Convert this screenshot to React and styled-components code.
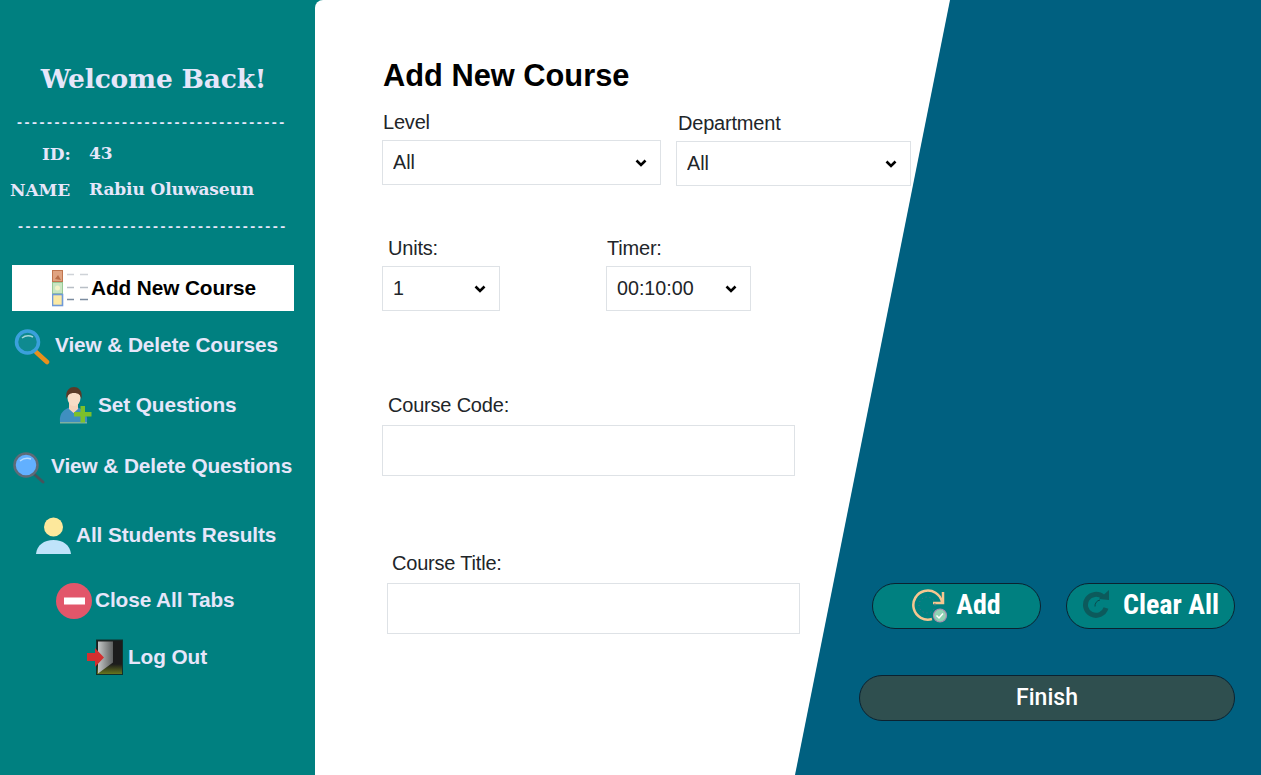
import React from "react";
import styled, {createGlobalStyle} from "styled-components";

const GlobalStyle = createGlobalStyle`
  html, body {
    margin: 0;
    padding: 0;
    background: #008080;
  }
  body {
    font-family: "Liberation Sans", Arial, sans-serif;
    overflow: hidden;
  }
`;

const Page = styled.div`
  width: 1261px;
  height: 775px;
  display: flex;
  background: #008080;
  overflow: hidden;
`;

const Sidebar = styled.aside`
  width: 315px;
  flex: none;
  display: flex;
  flex-direction: column;
  color: #e6e6fa;
`;

const Welcome = styled.h2`
  margin: 61px 0 0;
  height: 36px;
  line-height: 36px;
  width: 307px;
  text-align: center;
  font-family: "DejaVu Serif", serif;
  font-weight: 700;
  font-size: 26.5px;
  letter-spacing: -0.2px;
`;

const Dashes = styled.div`
  margin: ${(p) => p.$top}px 0 0 ${(p) => p.$left}px;
  height: 16px;
  line-height: 16px;
  font-family: "Liberation Sans", sans-serif;
  font-size: 15px;
  font-weight: 700;
  letter-spacing: 2.5px;
  white-space: nowrap;
`;

const InfoRow = styled.div`
  display: grid;
  grid-template-columns: 89px 1fr;
  margin-top: ${(p) => p.$top}px;
  height: 24px;
  font-family: "DejaVu Serif", serif;
  font-weight: 700;
`;

const InfoLabel = styled.span`
  padding-left: ${(p) => p.$left}px;
  font-size: 17px;
  line-height: 24px;
  white-space: nowrap;
  letter-spacing: -0.1px;
`;

const InfoValue = styled.span`
  font-size: 17px;
  line-height: 22px;
  white-space: nowrap;
  letter-spacing: -0.1px;
`;

const Nav = styled.nav`
  display: flex;
  flex-direction: column;
  margin-top: 31px;
`;

const NavItem = styled.a`
  display: flex;
  align-items: center;
  height: ${(p) => p.$height}px;
  margin: ${(p) => p.$top}px 21px 0 12px;
  padding-left: ${(p) => p.$left - 12}px;
  gap: 2px;
  background: ${(p) => (p.$active ? "#ffffff" : "transparent")};
  color: ${(p) => (p.$active ? "#000000" : "#e6e6fa")};
  font-size: 20.8px;
  font-weight: 700;
  letter-spacing: -0.1px;
  white-space: nowrap;
  cursor: pointer;
`;

const Main = styled.main`
  flex: 1;
  position: relative;
  display: grid;
  background: #ffffff;
  border-top-left-radius: 8px;
  overflow: hidden;

  &::before {
    content: "";
    position: absolute;
    inset: 0;
    background: #006080;
    clip-path: polygon(635px 0, 100% 0, 100% 100%, 480px 100%);
  }
`;

const Form = styled.form`
  grid-area: 1 / 1;
  position: relative;
  padding: 57px 0 0 67px;
  display: flex;
  flex-direction: column;
  color: #212529;
`;

const Title = styled.h2`
  margin: 0 0 0 1px;
  height: 38px;
  line-height: 38px;
  color: #000000;
  font-size: 30.8px;
  font-weight: 700;
`;

const Row = styled.div`
  display: flex;
  align-items: flex-start;
  margin-top: ${(p) => p.$top}px;
`;

const Field = styled.label`
  display: flex;
  flex-direction: column;
  margin: ${(p) => p.$top || 0}px 0 0 ${(p) => p.$left || 0}px;
`;

const FieldLabel = styled.span`
  height: 26px;
  line-height: 26px;
  padding-left: ${(p) => p.$indent || 0}px;
  font-size: 20px;
  letter-spacing: -0.2px;
  white-space: nowrap;
`;

const chevron = `url("data:image/svg+xml,%3csvg xmlns='http://www.w3.org/2000/svg' viewBox='0 0 12 12'%3e%3cpath fill='none' stroke='%23000' stroke-width='2.6' d='M1.500 3.500l4.500 4.500 4.500-4.500'/%3e%3c/svg%3e")`;

const Select = styled.select`
  box-sizing: border-box;
  width: ${(p) => p.$width}px;
  height: 45px;
  margin-top: ${(p) => p.$gap}px;
  padding: 0 30px 2px 10px;
  appearance: none;
  background: #ffffff ${chevron} no-repeat right 13px center / 12px 12px;
  border: 1px solid #dee2e6;
  border-radius: 0;
  color: #212529;
  font-family: "Liberation Sans", sans-serif;
  font-size: 19.7px;
  outline: none;
`;

const TextInput = styled.input`
  box-sizing: border-box;
  width: 413px;
  height: 51px;
  margin-top: 7px;
  background: #ffffff;
  border: 1px solid #dee2e6;
  border-radius: 0;
  outline: none;
`;

const Actions = styled.div`
  grid-area: 1 / 1;
  position: relative;
  justify-self: end;
  align-self: end;
  display: grid;
  grid-template-columns: 182px 169px;
  column-gap: 25px;
  row-gap: 46px;
  padding: 0 26px 54px 0;
`;

const ActionButton = styled.button`
  box-sizing: border-box;
  width: 169px;
  height: 46px;
  justify-self: end;
  display: flex;
  align-items: center;
  justify-content: center;
  gap: 7px;
  padding: 0 0 3px;
  background: #008080;
  border: 1px solid #0b2230;
  border-radius: 23px;
  color: #ffffff;
  font-family: "Roboto Condensed", "Liberation Sans Narrow", Roboto, sans-serif;
  font-stretch: 75%;
  font-size: 28px;
  font-weight: 700;
  cursor: pointer;
`;

const FinishButton = styled(ActionButton)`
  grid-column: 1 / -1;
  width: 376px;
  background: #2f4f4f;
  font-family: Roboto, sans-serif;
  font-stretch: 100%;
  font-size: 23px;
  font-weight: 500;
  padding: 0 0 1px;
`;

const ListIcon = () => (
    <svg width="37" height="38" viewBox="0 0 37 38">
        <rect x="0.5" y="1.5" width="10" height="11" fill="#e0a482" stroke="#c0764f"/>
        <path d="M3 10l3-4 3 5z" fill="#b96f4a"/>
        <rect x="0.5" y="13.5" width="10" height="11" fill="#c9e6c2" stroke="#98c996"/>
        <circle cx="5.5" cy="19" r="2.5" fill="#f3f3c8"/>
        <rect x="0.5" y="25.5" width="10" height="11" fill="#fbe9a4" stroke="#6f9ad8" strokeWidth="1.6"/>
        <path d="M15 5.5h7M28 5.5h8" stroke="#cfd3d8" strokeWidth="1.5"/>
        <path d="M15 18.500h7M28 18.500h8" stroke="#b9bfc6" strokeWidth="1.5"/>
        <path d="M15 30.500h7M28 30.500h8" stroke="#7b8ca0" strokeWidth="1.5"/>
    </svg>
);

const SearchCourseIcon = () => (
    <svg width="39" height="40" viewBox="0 0 39 40">
        <path d="M22 27l11 10" stroke="#e8901c" strokeWidth="4.500" strokeLinecap="round"/>
        <circle cx="13.500" cy="17" r="11" fill="#0f8a90" stroke="#3aa0dc" strokeWidth="3.500"/>
        <path d="M8 13q5-4 11-1" stroke="#a7d8d8" strokeWidth="1.500" fill="none"/>
    </svg>
);

const UserAddIcon = () => (
    <svg width="37" height="38" viewBox="0 0 37 38">
        <path d="M1 36c-1-9 4-13 11-15h5c7 2 12 6 11 15z" fill="#3f8fc0"/>
        <path d="M1 36h27v1.500H1z" fill="#7fb0a0"/>
        <path d="M10 17h9v6l-4.500 4-4.500-4z" fill="#f6d3bb"/>
        <ellipse cx="15" cy="12" rx="6.500" ry="8" fill="#f8dcc6"/>
        <path d="M7.500 13C6 4 11 1 15 1s9 3 7.500 12c-1-4-3-6-7.500-6s-6 2-7.500 6z" fill="#5a3a28"/>
        <path d="M21.500 20h4.500v6h6.500v4.500H26v6h-4.500v-6H15V26h6.500z" fill="#7cc02a"/>
    </svg>
);

const SearchQuestionIcon = () => (
    <svg width="36" height="38" viewBox="0 0 36 38">
        <path d="M21 27l9 8" stroke="#46545c" strokeWidth="3" strokeLinecap="round"/>
        <circle cx="13" cy="18" r="11.500" fill="#62b0ff" stroke="#5f6b78" strokeWidth="2.500"/>
        <path d="M7 14q5-4 11-2" stroke="#b8dcff" strokeWidth="1.500" fill="none"/>
    </svg>
);

const StudentIcon = () => (
    <svg width="38" height="38" viewBox="0 0 38 38">
        <circle cx="17.500" cy="11" r="9.500" fill="#fde89c"/>
        <path d="M0 38c1-9 8-14 17.500-14S34 29 35 38z" fill="#bfe3fa"/>
    </svg>
);

const CloseIcon = () => (
    <svg width="37" height="38" viewBox="0 0 37 38">
        <circle cx="18" cy="20" r="18" fill="#e2566a"/>
        <rect x="8" y="16.500" width="21" height="7" fill="#ffffff"/>
    </svg>
);

const LogoutIcon = () => (
    <svg width="39" height="38" viewBox="0 0 39 38">
        <defs>
            <linearGradient id="doorLeaf" x1="0" y1="0" x2="1" y2="0">
                <stop offset="0" stopColor="#c4c6c6"/>
                <stop offset="1" stopColor="#5e6060"/>
            </linearGradient>
            <linearGradient id="doorFloor" x1="0" y1="0" x2="0" y2="1">
                <stop offset="0" stopColor="#1c1c1c"/>
                <stop offset="0.700" stopColor="#1c1c1c"/>
                <stop offset="1" stopColor="#6b7a1e"/>
            </linearGradient>
        </defs>
        <rect x="9.500" y="2" width="26" height="34.500" fill="url(#doorFloor)" stroke="#10302c"/>
        <path d="M11 3.500h15v21l-15 11z" fill="url(#doorLeaf)"/>
        <path d="M0 15h8v-5l9 9.500-9 9.500v-6H0z" fill="#d42f2f"/>
    </svg>
);

const RefreshAddIcon = () => (
    <svg width="37" height="36" viewBox="0 0 37 36">
        <path d="M30 15A14.500 14.500 0 1 0 20 32" fill="none" stroke="#f6c690" strokeWidth="2.500"/>
        <path d="M31 5v11H21" fill="none" stroke="#f6c690" strokeWidth="2.500"/>
        <circle cx="15" cy="18" r="8" fill="none" stroke="#5d6a8a" strokeWidth="1" strokeDasharray="1 3"/>
        <circle cx="28" cy="28.500" r="6.500" fill="#8fd3b4" stroke="#a88fb0" strokeWidth="1.200"/>
        <path d="M24.500 28.500l2.500 2.500 4-4.500" fill="none" stroke="#ffffff" strokeWidth="1.500"/>
    </svg>
);

const RefreshClearIcon = () => (
    <svg width="34" height="36" viewBox="0 0 34 36">
        <path d="M21 10A10.500 10.500 0 1 0 24 21" fill="none" stroke="#0c5a5c" strokeWidth="5"/>
        <path d="M13 19.500A6 6 0 0 1 18 13" fill="none" stroke="#0a4a4c" strokeWidth="1"/>
        <path d="M17 12l10-9v10z" fill="#0c5a5c"/>
    </svg>
);

const navItems = [
    {label: "Add New Course", icon: <ListIcon/>, left: 52, top: 0, height: 46, active: true},
    {label: "View & Delete Courses", icon: <SearchCourseIcon/>, left: 14, top: 11, height: 46},
    {label: "Set Questions", icon: <UserAddIcon/>, left: 59, top: 14, height: 46},
    {label: "View & Delete Questions", icon: <SearchQuestionIcon/>, left: 13, top: 15, height: 46},
    {label: "All Students Results", icon: <StudentIcon/>, left: 36, top: 23, height: 46},
    {label: "Close All Tabs", icon: <CloseIcon/>, left: 56, top: 19, height: 46},
    {label: "Log Out", icon: <LogoutIcon/>, left: 87, top: 11, height: 46},
];

const App = () => {
    return (
        <Page>
            <GlobalStyle/>
            <Sidebar>
                <Welcome>Welcome Back!</Welcome>
                <Dashes $top={17} $left={17}>------------------------------------</Dashes>
                <InfoRow $top={12}>
                    <InfoLabel $left={42}>ID:</InfoLabel>
                    <InfoValue>43</InfoValue>
                </InfoRow>
                <InfoRow $top={12}>
                    <InfoLabel $left={10}>NAME</InfoLabel>
                    <InfoValue>Rabiu Oluwaseun</InfoValue>
                </InfoRow>
                <Dashes $top={16} $left={18}>------------------------------------</Dashes>
                <Nav>
                    {navItems.map((item) => (
                        <NavItem
                            key={item.label}
                            $active={item.active}
                            $left={item.left}
                            $top={item.top}
                            $height={item.height}
                        >
                            {item.icon}
                            {item.label}
                        </NavItem>
                    ))}
                </Nav>
            </Sidebar>
            <Main>
                <Form>
                    <Title>Add New Course</Title>
                    <Row $top={14}>
                        <Field>
                            <FieldLabel $indent={1}>Level</FieldLabel>
                            <Select $width={279} $gap={5}><option>All</option></Select>
                        </Field>
                        <Field $left={15} $top={1}>
                            <FieldLabel $indent={2}>Department</FieldLabel>
                            <Select $width={235} $gap={5}><option>All</option></Select>
                        </Field>
                    </Row>
                    <Row $top={49}>
                        <Field>
                            <FieldLabel $indent={6}>Units:</FieldLabel>
                            <Select $width={118} $gap={5}><option>1</option></Select>
                        </Field>
                        <Field $left={106}>
                            <FieldLabel $indent={1}>Timer:</FieldLabel>
                            <Select $width={145} $gap={5}><option>00:10:00</option></Select>
                        </Field>
                    </Row>
                    <Row $top={81}>
                        <Field>
                            <FieldLabel $indent={6}>Course Code:</FieldLabel>
                            <TextInput/>
                        </Field>
                    </Row>
                    <Row $top={74}>
                        <Field $left={5}>
                            <FieldLabel $indent={5}>Course Title:</FieldLabel>
                            <TextInput/>
                        </Field>
                    </Row>
                </Form>
                <Actions>
                    <ActionButton type="button"><RefreshAddIcon/>Add</ActionButton>
                    <ActionButton type="button"><RefreshClearIcon/>Clear All</ActionButton>
                    <FinishButton type="button">Finish</FinishButton>
                </Actions>
            </Main>
        </Page>
    );
};

export default App;
